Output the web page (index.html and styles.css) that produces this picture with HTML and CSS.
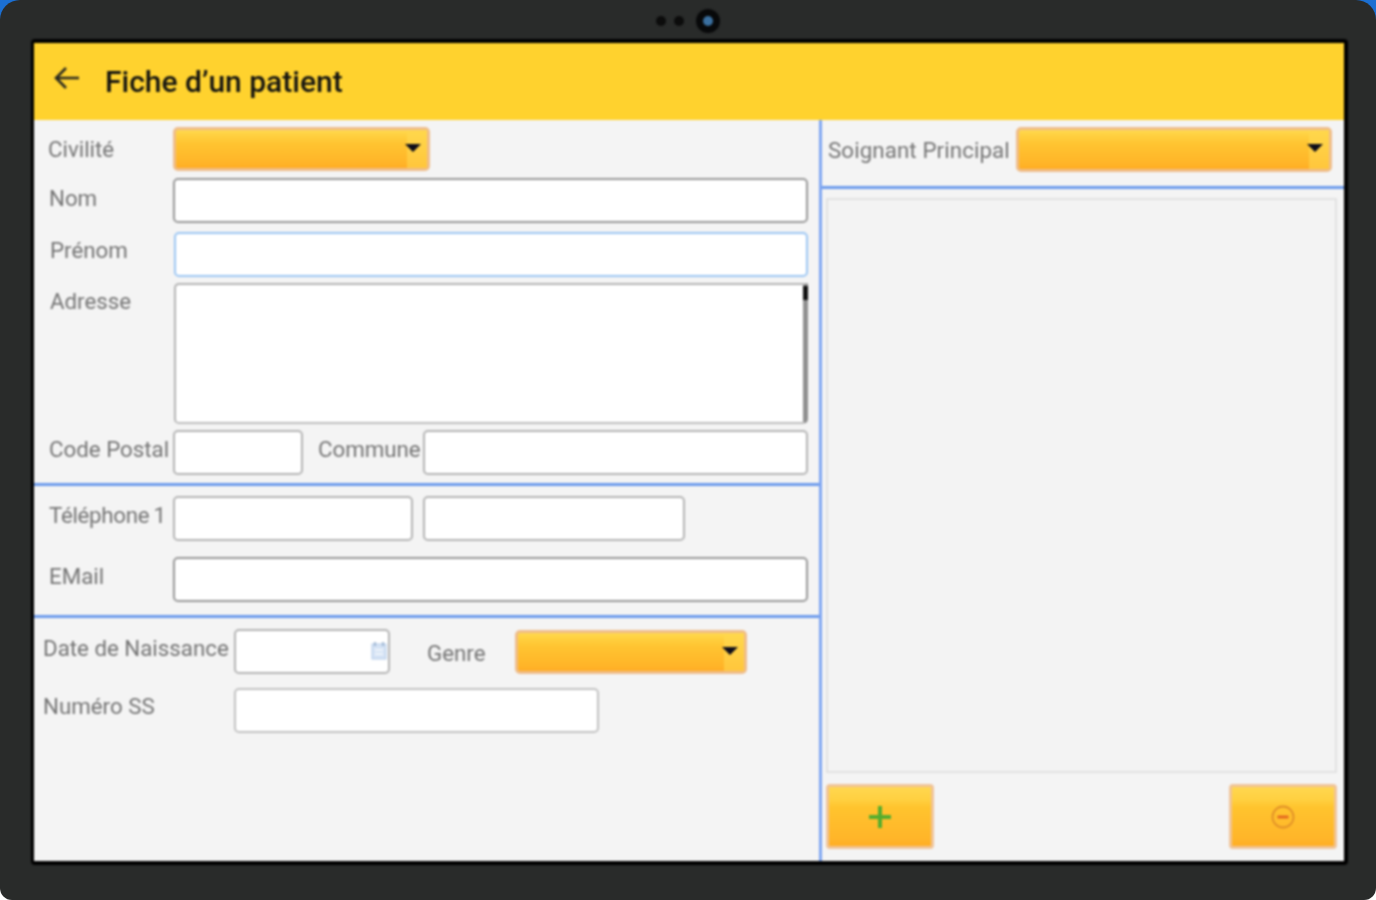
FILE: index.html
```html
<!DOCTYPE html>
<html lang="fr">
<head>
<meta charset="utf-8">
<title>Fiche d'un patient</title>
<link rel="stylesheet" href="styles.css">
</head>
<body>
<div class="frame">
  <div class="bezel">
    <span class="dot"></span><span class="dot"></span><span class="camera"></span>
  </div>
  <div class="screen">
    <header class="appbar">
      <svg class="back" viewBox="0 0 26 24" width="26" height="24"><path d="M25 12H2M12 2L2 12l10 10" fill="none" stroke="#2a2a20" stroke-width="2.6"/></svg>
      <h1 class="title">Fiche d’un patient</h1>
    </header>
    <div class="content">
      <main class="left">
        <section class="sec sec-id">
          <div class="row row-civ">
            <label class="lab">Civilité</label>
            <div class="select sel-civ"><span class="caret"></span></div>
          </div>
          <div class="row row-nom">
            <label class="lab">Nom</label>
            <input class="field grow dark">
          </div>
          <div class="row row-pre shifted">
            <label class="lab">Prénom</label>
            <input class="field grow focus">
          </div>
          <div class="row row-adr shifted top">
            <label class="lab">Adresse</label>
            <div class="area grow"><span class="thumb"></span></div>
          </div>
          <div class="row row-cp">
            <label class="lab">Code Postal</label>
            <input class="field f-cp">
            <label class="lab lab-com">Commune</label>
            <input class="field grow">
          </div>
        </section>
        <section class="sec sec-contact">
          <div class="row row-tel">
            <label class="lab lab-tel">Téléphone 1</label>
            <input class="field f-tel">
            <input class="field f-tel2">
          </div>
          <div class="row row-mail">
            <label class="lab">EMail</label>
            <input class="field grow dark">
          </div>
        </section>
        <section class="sec-birth">
          <div class="row row-date">
            <label class="lab lab-wide">Date de Naissance</label>
            <div class="datewrap">
              <input class="field f-date">
              <svg class="cal" viewBox="0 0 16 18" width="16" height="18"><rect x="1" y="2" width="14" height="15" fill="#d5e3f5" stroke="#b4cbe8"/><path d="M4 0v4M12 0v4" stroke="#8fa9c9" stroke-width="1.5"/><path d="M4 8h8M4 12h8" stroke="#eef4fb" stroke-width="2"/></svg>
            </div>
            <label class="lab lab-genre">Genre</label>
            <div class="select sel-genre"><span class="caret"></span></div>
          </div>
          <div class="row row-ss">
            <label class="lab lab-wide">Numéro SS</label>
            <input class="field f-ss">
          </div>
        </section>
      </main>
      <aside class="right">
        <div class="soignant">
          <label class="lab lab-soi">Soignant Principal</label>
          <div class="select grow"><span class="caret"></span></div>
        </div>
        <div class="listpane">
          <div class="listbox"></div>
          <div class="actions">
            <button class="btn" type="button" aria-label="Ajouter">
              <svg viewBox="0 0 24 24" width="24" height="24"><path d="M12 1v22M1 12h22" stroke="#53ad2e" stroke-width="4"/></svg>
            </button>
            <button class="btn" type="button" aria-label="Retirer">
              <svg viewBox="0 0 24 24" width="24" height="24"><circle cx="12" cy="12" r="10.5" fill="none" stroke="#e08f28" stroke-width="1.8"/><path d="M6.5 12h11" stroke="#e2631f" stroke-width="2.8"/></svg>
            </button>
          </div>
        </div>
      </aside>
    </div>
  </div>
</div>
</body>
</html>
```
FILE: styles.css
```css
* { box-sizing: border-box; }
html, body { margin: 0; height: 900px; overflow: hidden; }
body { background: linear-gradient(#1b6fd2 0 50%, #ffffff 50% 100%); }

.frame {
  width: 1376px;
  height: 900px;
  padding: 0 28px 0 31px;
  background: #292b2a;
  border-radius: 20px 20px 12px 12px;
  font-family: Roboto, "Liberation Sans", sans-serif;
}
.bezel {
  height: 39px;
  padding: 3px 3px 0 0;
  display: flex;
  align-items: center;
  justify-content: center;
  filter: blur(0.9px);
}
.dot { width: 10px; height: 10px; border-radius: 50%; background: #0c0c0c; margin-right: 8px; }
.camera { width: 24px; height: 24px; border-radius: 50%; background: #08090a; border: 7px solid #08090a; margin-left: 4px; }
.camera::before { content: ""; display: block; width: 10px; height: 10px; border-radius: 50%; background: #3a6f9f; }

.screen {
  width: 1317px;
  height: 826px;
  border: solid #000;
  border-width: 4px 4px 4px 3px;
  border-radius: 4px;
  background: #f4f4f4;
  display: flex;
  flex-direction: column;
  filter: blur(0.9px);
}
.appbar {
  height: 77px;
  flex: none;
  background: #ffd22e;
  display: flex;
  align-items: center;
  padding: 0 0 0 20px;
}
.back { margin-bottom: 8px; }
.title {
  margin: 0 0 0 25px;
  font-size: 30px;
  font-weight: 500;
  color: #141410;
}
.content { flex: 1; display: flex; min-height: 0; }
.left { width: 788px; flex: none; border-right: 3px solid #7fa6f2; display: flex; flex-direction: column; }
.right { flex: 1; display: flex; flex-direction: column; }

.sec { border-bottom: 3px solid #6d9bec; padding: 0 11px 0 14px; }
.sec-id { height: 366px; padding-top: 7px; }
.sec-contact { height: 132px; padding-top: 10px; }
.sec-birth { padding: 11px 0 0 9px; }

.row { display: flex; align-items: center; }
.row.top { align-items: flex-start; }
.shifted { padding-left: 1px; }
.row-civ { height: 44px; }
.row-nom { height: 45px; margin-top: 7px; }
.row-pre { height: 45px; margin-top: 9px; }
.row-adr { height: 141px; margin-top: 6px; }
.row-cp { height: 45px; margin-top: 6px; }
.row-tel { height: 45px; }
.row-mail { height: 45px; margin-top: 16px; }
.row-date { height: 45px; }
.row-ss { height: 45px; margin-top: 14px; }

.lab {
  width: 125px;
  flex: none;
  font-size: 22.3px;
  color: #747474;
  white-space: nowrap;
  padding-bottom: 5px;
}
.sec .lab { text-indent: 1px; }
.sec .row-civ .lab { padding: 0; text-indent: 0; }
.row-pre .lab { padding-bottom: 9px; }
.row-adr .lab { padding: 5px 0 0; }
.row-cp .lab, .row-tel .lab, .row-mail .lab, .row-date .lab { padding-bottom: 7px; }
.row-ss .lab { padding-bottom: 9px; }
.lab-tel { word-spacing: -1px; letter-spacing: -0.3px; }
.sec .row-cp .lab-com { width: 120px; padding-left: 15px; padding-bottom: 7px; text-indent: 0; letter-spacing: -0.05px; }
.lab-wide { width: 191px; }
.row-date .lab-genre { width: 88px; margin-left: 37px; padding: 2px 0 0; }
.lab-soi { width: 194px; padding: 0 0 0 6px; letter-spacing: 0.1px; }

.grow { flex: 1; min-width: 0; }
.field, .area {
  display: block;
  height: 45px;
  margin: 0;
  padding: 0;
  background: #fff;
  border: 2px solid #b4b4b4;
  border-radius: 5px;
  outline: none;
}
.dark { border-color: #989898; }
.focus { border-color: #9cc6f3; }
.f-cp { width: 130px; }
.f-tel { width: 240px; }
.f-tel2 { width: 262px; margin-left: 10px; }
.f-date { width: 156px; }
.f-ss { width: 365px; border-color: #c2c2c2; }
.datewrap { position: relative; }
.cal { position: absolute; right: 3px; top: 13px; }

.area {
  height: 141px;
  position: relative;
  border-radius: 5px 0 5px 5px;
  border-width: 2px 5px 2px 2px;
  border-color: #b4b4b4 #909090 #bdbdbd #b4b4b4;
}
.thumb { position: absolute; right: -5px; top: 1px; width: 5px; height: 14px; background: #111; }

.select {
  height: 44px;
  position: relative;
  border: 3px solid #efbd8a;
  border-radius: 5px;
  background: linear-gradient(#ffd94f, #ffcf3e 16%, #ffc431 36%, #ffb428 88%, #ffac23);
}
.select::after {
  content: "";
  position: absolute;
  right: 0; top: 0; bottom: 0;
  width: 20px;
  background: linear-gradient(#ffd84c, #ffc63c);
}
.sel-civ { width: 257px; }
.sel-genre { width: 232px; }
.caret {
  position: absolute;
  right: 6px;
  top: 14px;
  z-index: 1;
  border-style: solid;
  border-width: 8px 8px 0;
  border-color: #0d0d1a transparent transparent;
}

.soignant {
  height: 69px;
  flex: none;
  display: flex;
  align-items: center;
  padding: 0 12px 7px 0;
  border-bottom: 3px solid #6d9bec;
}
.soignant .select { height: 45px; }
.listpane { flex: 1; display: flex; flex-direction: column; padding: 9px 7px 12px 4px; }
.listbox { flex: 1; border: 2px solid #e2e2e2; background: #f3f3f3; }
.actions { display: flex; justify-content: space-between; margin-top: 11px; }
.btn {
  width: 108px;
  height: 65px;
  padding: 0;
  display: flex;
  align-items: center;
  justify-content: center;
  border: 3px solid #f0c498;
  border-radius: 4px;
  background: linear-gradient(#ffd750, #ffd040 22%, #ffc42e 34%, #ffb529 88%, #ffae24);
}
```
